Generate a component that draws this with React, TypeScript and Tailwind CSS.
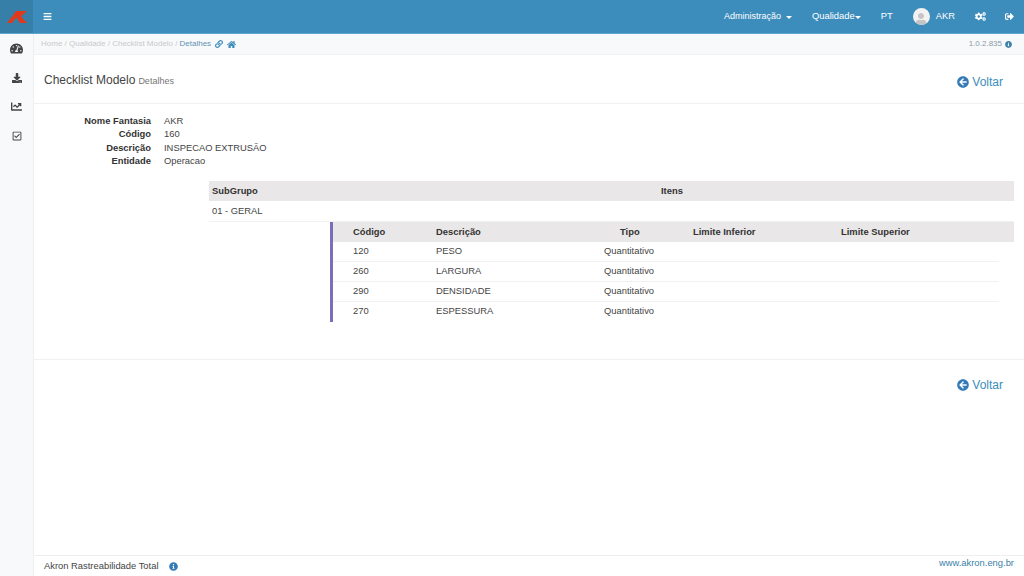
import { FaArrowCircleLeft, FaBars, FaChartLine, FaCogs, FaDownload, FaHome, FaInfoCircle, FaLink, FaRegCheckSquare, FaSignOutAlt, FaTachometerAlt, FaUser } from 'react-icons/fa'

const items = [
  { codigo: '120', descricao: 'PESO' },
  { codigo: '260', descricao: 'LARGURA' },
  { codigo: '290', descricao: 'DENSIDADE' },
  { codigo: '270', descricao: 'ESPESSURA' },
]

const details = [
  ['Nome Fantasia', 'AKR'],
  ['Código', '160'],
  ['Descrição', 'INSPECAO EXTRUSÃO'],
  ['Entidade', 'Operacao'],
]

function Voltar() {
  return (
    <a className="flex items-center gap-[3px] text-[12px] leading-[20px] text-[#3c8dbc]">
      <FaArrowCircleLeft className="h-[12px] w-[12px] text-[#337ab7]" />
      Voltar
    </a>
  )
}

export default function App() {
  return (
    <div className="flex h-[576px] w-[1024px] flex-col overflow-hidden bg-white font-['Liberation_Sans',Arial,sans-serif] text-[9.38px] text-[#444]">
      {/* Header */}
      <header className="flex h-[34px] shrink-0 border-b border-[#5fa5cd] bg-[#3c8dbc] text-white">
        <div className="flex w-[33px] items-center justify-center bg-[#367fa9]">
          <svg viewBox="0 0 20 12" className="h-[12px] w-[20px]">
            <path d="M0 12 L7 3 L12 3 L5 12 Z M7 3 L9 0 L20 0 L14 5.5 L20 12 L13 12 L9 6 Z" fill="#e0391c" />
          </svg>
        </div>
        <div className="flex flex-1 items-center pl-[10px]">
          <FaBars className="h-[9px] w-[9px]" />
          <nav className="ml-auto flex items-center text-[9.38px]">
            <span className="flex items-center gap-[5px] text-[9px]">
              Administração
              <span className="mt-[1px] border-x-[3px] border-t-[3px] border-x-transparent border-t-white" />
            </span>
            <span className="ml-[20px] flex items-center">
              Qualidade
              <span className="mt-[1px] border-x-[3px] border-t-[3px] border-x-transparent border-t-white" />
            </span>
            <span className="ml-[20px]">PT</span>
            <span className="ml-[20px] flex h-[17px] w-[17px] items-end justify-center overflow-hidden rounded-full bg-[#f2f2f2]">
              <FaUser className="h-[12px] w-[12px] text-[#c4c4c4]" />
            </span>
            <span className="ml-[6px]">AKR</span>
            <FaCogs className="ml-[20px] h-[11px] w-[11px]" />
            <FaSignOutAlt className="ml-[19px] mr-[10px] h-[9px] w-[9px]" />
          </nav>
        </div>
      </header>

      <div className="flex min-h-0 flex-1">
        {/* Sidebar */}
        <aside className="flex w-[34px] shrink-0 flex-col items-center border-r border-[#eeeff1] bg-[#f8f9fb] text-[#444]">
          <span className="flex h-[29px] items-center"><FaTachometerAlt className="h-[13px] w-[13px]" /></span>
          <span className="flex h-[29px] items-center"><FaDownload className="h-[10px] w-[10px]" /></span>
          <span className="flex h-[29px] items-center"><FaChartLine className="h-[11px] w-[11px]" /></span>
          <span className="flex h-[29px] items-center"><FaRegCheckSquare className="h-[10px] w-[10px]" /></span>
        </aside>

        <main className="flex min-w-0 flex-1 flex-col">
          {/* Breadcrumb */}
          <div className="flex h-[21px] shrink-0 items-center border-b border-[#f1f1f1] bg-[#f8f9fb] pl-[7px] pr-[12px] text-[8px] text-[#c9c9c9]">
            <span>Home / Qualidade / Checklist Modelo / </span>
            <span className="ml-[2px] text-[#5f93b5]">Detalhes</span>
            <FaLink className="ml-[4px] h-[8px] w-[8px] text-[#3c8dbc]" />
            <FaHome className="ml-[4px] h-[9px] w-[9px] text-[#3c8dbc]" />
            <span className="ml-auto flex items-center gap-[3px] text-[#8a9aa8]">
              1.0.2.835
              <FaInfoCircle className="h-[7px] w-[7px] text-[#3c7fa9]" />
            </span>
          </div>

          {/* Page title */}
          <div className="flex h-[49px] shrink-0 items-center justify-between border-b border-[#f1f1f1] pl-[10px] pr-[21px]">
            <div className="mt-[2px] flex items-baseline gap-[3px]">
              <span className="text-[12px] text-[#444]">Checklist Modelo</span>
              <span className="text-[9px] text-[#777]">Detalhes</span>
            </div>
            <div className="mt-[6px]">
              <Voltar />
            </div>
          </div>

          {/* Details */}
          <div className="h-[256px] shrink-0 border-b border-[#f1f1f1]">
            <dl className="grid grid-cols-[117px_1fr] gap-x-[13px] pt-[11px] leading-[13.4px]">
              {details.map(([label, value]) => (
                <div key={label} className="contents">
                  <dt className="text-right font-bold text-[#333]">{label}</dt>
                  <dd>{value}</dd>
                </div>
              ))}
            </dl>

            <div className="ml-[175px] mr-[10px] mt-[12px]">
              <div className="flex h-[20px] items-center bg-[#e9e7e7] pl-[3px] font-bold text-[#333]">
                <span className="w-[449px]">SubGrupo</span>
                <span>Itens</span>
              </div>
              <div className="flex h-[21px] items-center border-b border-[#f1f1f1] pl-[3px]">01 - GERAL</div>
              <div className="ml-[121px] border-l-[3px] border-[#7a6fbd]">
                <div className="grid h-[20px] grid-cols-[83px_148px_109px_148px_1fr] items-center bg-[#e9e7e7] pl-[20px] font-bold text-[#333]">
                  <span>Código</span>
                  <span>Descrição</span>
                  <span className="pl-[36px]">Tipo</span>
                  <span>Limite Inferior</span>
                  <span>Limite Superior</span>
                </div>
                <div className="mr-[15px]">
                  {items.map((item, i) => (
                    <div
                      key={item.codigo}
                      className={`grid h-[20px] grid-cols-[83px_148px_110px] items-center border-b pl-[20px] ${i < items.length - 1 ? 'border-[#f1f1f1]' : 'border-transparent'}`}
                    >
                      <span>{item.codigo}</span>
                      <span>{item.descricao}</span>
                      <span className="pl-[20px]">Quantitativo</span>
                    </div>
                  ))}
                </div>
              </div>
            </div>
          </div>

          {/* Bottom action */}
          <div className="flex flex-1 justify-end pr-[21px] pt-[15px]">
            <div>
              <Voltar />
            </div>
          </div>

          {/* Footer */}
          <footer className="flex h-[21px] shrink-0 items-center border-t border-[#eeeeee] pl-[10px] pr-[10px]">
            <span>Akron Rastreabilidade Total</span>
            <FaInfoCircle className="ml-[11px] h-[9px] w-[9px] text-[#337ab7]" />
            <span className="mb-[5px] ml-auto text-[#3c7fa9]">www.akron.eng.br</span>
          </footer>
        </main>
      </div>
    </div>
  )
}
